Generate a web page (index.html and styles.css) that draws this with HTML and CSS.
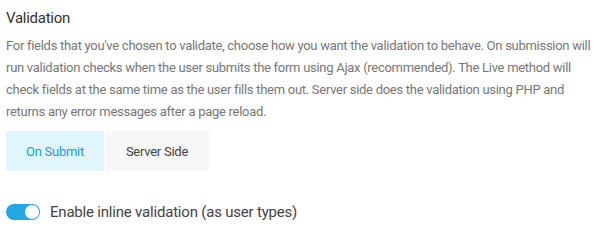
FILE: index.html
```html
<!DOCTYPE html>
<html>
<head>
<meta charset="utf-8">
<link rel="stylesheet" href="styles.css">
</head>
<body>
<div class="panel">
  <h2 class="title">Validation</h2>
  <p class="desc">For fields that you've chosen to validate, choose how you want the validation to behave. On submission will run validation checks when the user submits the form using Ajax (recommended). The Live method will check fields at the same time as the user fills them out. Server side does the validation using PHP and returns any error messages after a page reload.</p>
  <div class="segmented">
    <button class="seg seg-active">On Submit</button>
    <button class="seg seg-plain">Server Side</button>
  </div>
  <label class="toggle-row">
    <span class="toggle"><span class="knob"></span></span>
    <span class="toggle-label">Enable inline validation (as user types)</span>
  </label>
</div>
</body>
</html>
```
FILE: styles.css
```css
html, body {
  margin: 0;
  padding: 0;
  background: #ffffff;
}
body {
  font-family: Roboto, "Liberation Sans", sans-serif;
}
.panel {
  padding: 8px 2px 0 6px;
}
.title {
  margin: 0;
  font-size: 15px;
  font-weight: 400;
  line-height: 20px;
  letter-spacing: -0.27px;
  color: #333333;
}
.desc {
  margin: 6.5px 0 0 0;
  font-size: 13px;
  line-height: 22px;
  letter-spacing: -0.28px;
  color: #777777;
}
.segmented {
  display: flex;
  margin-top: 8.5px;
}
.seg {
  height: 40px;
  border: none;
  font-family: inherit;
  font-size: 13px;
  letter-spacing: -0.25px;
  padding: 0;
  cursor: pointer;
}
.seg-active {
  width: 98px;
  background: #e1f5fe;
  color: #139ee0;
  border-radius: 4px 0 0 4px;
  margin-right: 1px;
}
.seg-plain {
  width: 104px;
  background: #f7f7f7;
  color: #444444;
  border-radius: 0 4px 4px 0;
}
.toggle-row {
  display: flex;
  align-items: center;
  gap: 10px;
  margin-top: 32px;
}
.toggle {
  position: relative;
  width: 34px;
  height: 16px;
  border-radius: 8px;
  background: #24a6e2;
  flex: none;
}
.knob {
  position: absolute;
  right: 1px;
  top: 1px;
  width: 14px;
  height: 14px;
  border-radius: 50%;
  background: #ffffff;
}
.toggle-label {
  font-size: 15px;
  letter-spacing: -0.2px;
  line-height: 18px;
  color: #444444;
}
```
